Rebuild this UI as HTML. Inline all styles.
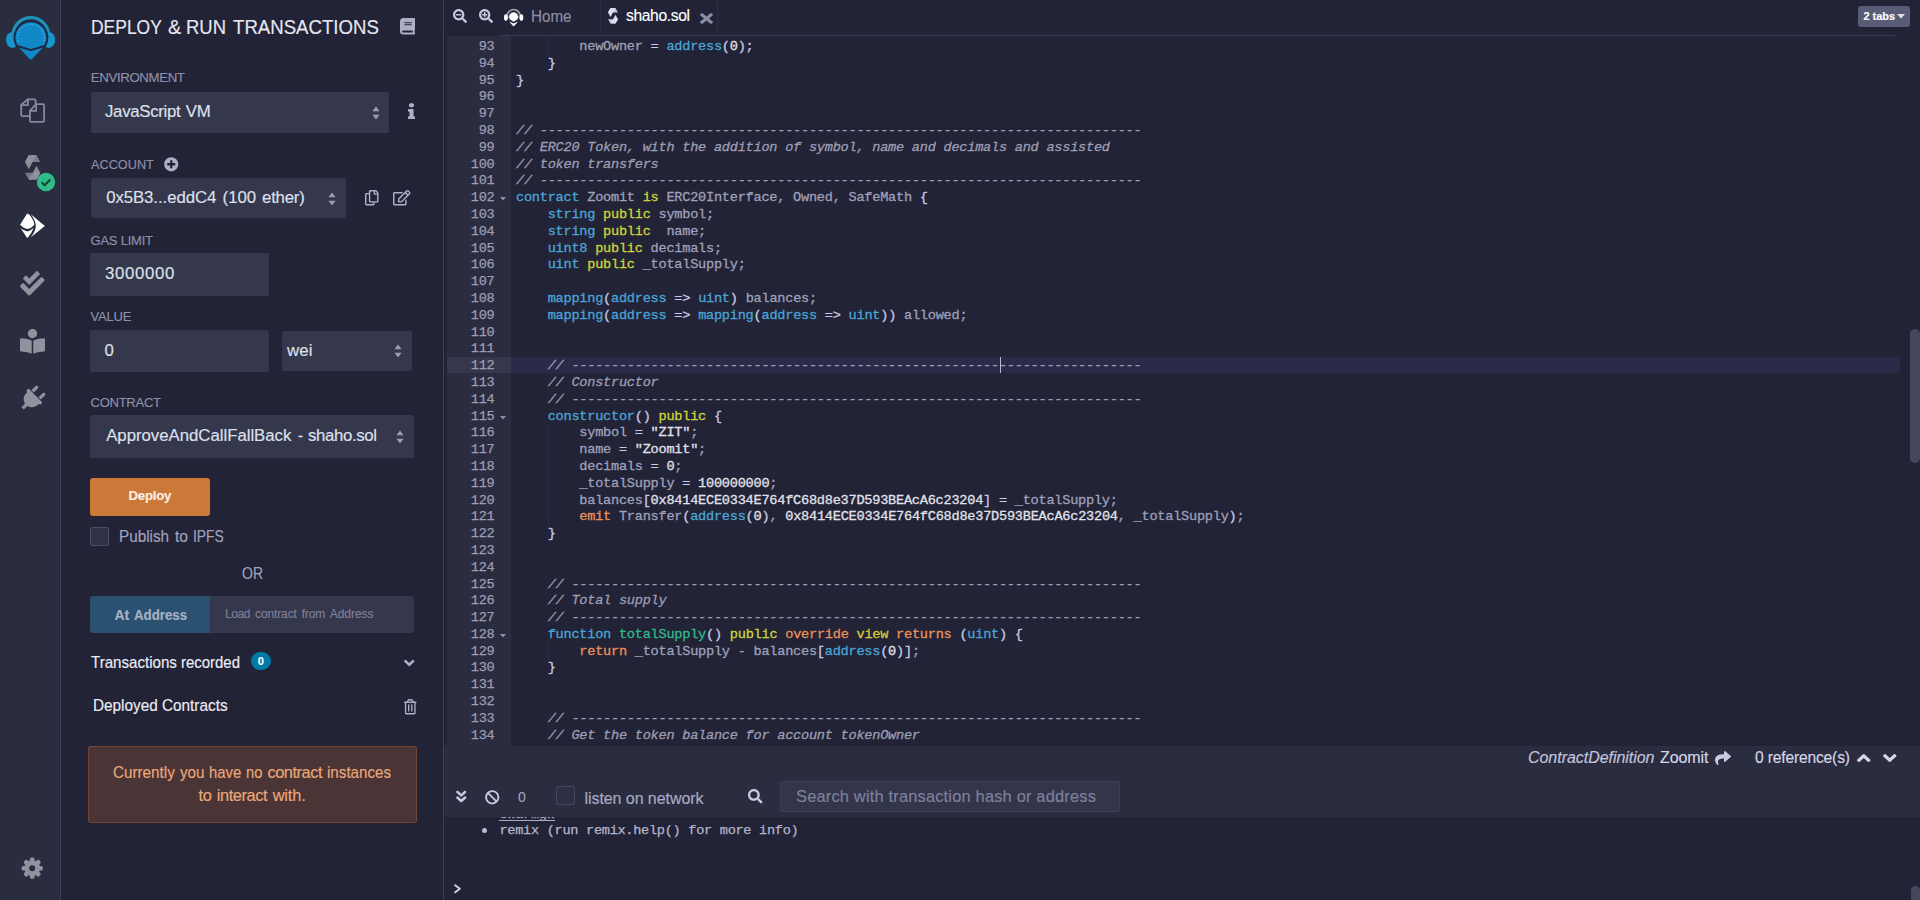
<!DOCTYPE html>
<html><head><meta charset="utf-8"><title>Remix - Ethereum IDE</title>
<style>
html,body{margin:0;padding:0;}
body{width:1920px;height:900px;overflow:hidden;background:#222336;position:relative;font-family:"Liberation Sans",sans-serif;}
.t{position:absolute;white-space:nowrap;-webkit-text-stroke:0.15px;}
.b{position:absolute;}
svg{position:absolute;overflow:visible;}
.code{position:absolute;left:516px;top:39px;font-family:"Liberation Mono",monospace;font-size:13.6px;letter-spacing:-0.241px;line-height:16.8px;color:#9fa0ba;white-space:pre;-webkit-text-stroke:0.3px;}
.code div{height:16.8px;}
.ln{position:absolute;left:446px;width:48.5px;top:39px;font-family:"Liberation Mono",monospace;font-size:13.6px;letter-spacing:-0.241px;line-height:16.8px;color:#9c9db6;text-align:right;-webkit-text-stroke:0.25px;}
.ln div{height:16.8px;}
.k{color:#4aa5d6}.y{color:#cbd63a}.v{color:#d9ca3c}.o{color:#e8915a}.g{color:#32ba89}.w{color:#e0e1eb}.c{color:#9d9eb3;font-style:italic}.p{color:#c8c9e6}
.term{position:absolute;font-family:"Liberation Mono",monospace;white-space:pre;-webkit-text-stroke:0.25px;}
</style></head><body>
<div class="b" style="left:0px;top:0px;width:60px;height:900px;background:#2a2c3f;"></div>
<div class="b" style="left:60px;top:0px;width:1px;height:900px;background:#3e4058;"></div>
<div class="b" style="left:443px;top:0px;width:1px;height:900px;background:#3e4058;"></div>
<div class="b" style="left:447px;top:36px;width:64px;height:710px;background:#2a2c3f;"></div>
<div class="b" style="left:447px;top:357px;width:64px;height:16px;background:#35384c;"></div>
<div class="b" style="left:511px;top:357px;width:1389px;height:16px;background:#2a2b48;"></div>
<div class="b" style="left:498.5px;top:35px;width:1396.5px;height:1px;background:#3b3d54;"></div>
<div class="b" style="left:600px;top:0px;width:1px;height:35px;background:#2c2e44;"></div>
<div class="b" style="left:717px;top:0px;width:1px;height:35px;background:#2c2e44;"></div>
<div class="b" style="left:444px;top:746px;width:1476px;height:71px;background:#2a2c3f;"></div>
<div class="b" style="left:444px;top:770px;width:1476px;height:1px;background:#282a3d;"></div>
<div class="b" style="left:444px;top:775px;width:1476px;height:1px;background:#2d2f43;"></div>
<div class="b" style="left:1910px;top:329px;width:10px;height:134px;background:#45475e;border-radius:5px;"></div>
<div class="b" style="left:1911px;top:886px;width:9px;height:14px;background:#45475e;border-radius:5px 5px 0 0;"></div>
<div class="t" style="left:90.80px;top:12.70px;font-size:19.7px;line-height:28px;color:#e6e7f1;transform:scaleX(0.8870);transform-origin:0 50%;">DEPLOY</div>
<div class="t" style="left:168.00px;top:12.70px;font-size:19.7px;line-height:28px;color:#e6e7f1;letter-spacing:-0.341px;">&amp;</div>
<div class="t" style="left:185.80px;top:12.70px;font-size:19.7px;line-height:28px;color:#e6e7f1;transform:scaleX(0.9372);transform-origin:0 50%;">RUN</div>
<div class="t" style="left:233.30px;top:12.70px;font-size:19.7px;line-height:28px;color:#e6e7f1;transform:scaleX(0.9460);transform-origin:0 50%;">TRANSACTIONS</div>
<div class="t" style="left:90.80px;top:68.10px;font-size:13.3px;line-height:19px;color:#8f91aa;letter-spacing:-0.408px;">ENVIRONMENT</div>
<div class="b" style="left:91px;top:92px;width:298px;height:41px;background:#35384c;border-radius:2px;"></div>
<div class="t" style="left:105.00px;top:99.60px;font-size:16.8px;line-height:24px;color:#dfe0ec;letter-spacing:-0.292px;">JavaScript</div>
<div class="t" style="left:185.80px;top:99.60px;font-size:16.8px;line-height:24px;color:#dfe0ec;letter-spacing:-0.201px;">VM</div>
<div class="t" style="left:90.60px;top:155.00px;font-size:13.3px;line-height:19px;color:#8f91aa;transform:scaleX(0.9565);transform-origin:0 50%;">ACCOUNT</div>
<div class="b" style="left:91px;top:178px;width:255px;height:40px;background:#35384c;border-radius:2px;"></div>
<div class="t" style="left:106.20px;top:186.40px;font-size:16.8px;line-height:24px;color:#dfe0ec;letter-spacing:-0.079px;">0x5B3...eddC4</div>
<div class="t" style="left:222.60px;top:186.40px;font-size:16.8px;line-height:24px;color:#dfe0ec;letter-spacing:-0.009px;">(100</div>
<div class="t" style="left:262.00px;top:186.40px;font-size:16.8px;line-height:24px;color:#dfe0ec;letter-spacing:-0.198px;">ether)</div>
<div class="t" style="left:90.50px;top:231.50px;font-size:13px;line-height:18px;color:#8f91aa;letter-spacing:-0.224px;">GAS LIMIT</div>
<div class="b" style="left:90px;top:253px;width:179px;height:43px;background:#35384c;border-radius:2px;"></div>
<div class="t" style="left:105.00px;top:262.00px;font-size:16.8px;line-height:24px;color:#dfe0ec;letter-spacing:0.682px;">3000000</div>
<div class="t" style="left:90.50px;top:308.00px;font-size:13px;line-height:18px;color:#8f91aa;letter-spacing:-0.167px;">VALUE</div>
<div class="b" style="left:90px;top:330px;width:179px;height:42px;background:#35384c;border-radius:2px;"></div>
<div class="t" style="left:104.50px;top:339.00px;font-size:16.8px;line-height:24px;color:#dfe0ec;letter-spacing:0.156px;">0</div>
<div class="b" style="left:282px;top:331px;width:130px;height:40px;background:#35384c;border-radius:2px;"></div>
<div class="t" style="left:287.00px;top:339.00px;font-size:16.8px;line-height:24px;color:#dfe0ec;letter-spacing:0.145px;">wei</div>
<div class="t" style="left:90.50px;top:393.50px;font-size:13px;line-height:18px;color:#8f91aa;letter-spacing:-0.246px;">CONTRACT</div>
<div class="b" style="left:90px;top:415px;width:324px;height:43px;background:#35384c;border-radius:2px;"></div>
<div class="t" style="left:106.20px;top:424.00px;font-size:16.8px;line-height:24px;color:#dfe0ec;letter-spacing:-0.021px;">ApproveAndCallFallBack</div>
<div class="t" style="left:297.50px;top:424.00px;font-size:16.8px;line-height:24px;color:#dfe0ec;transform:scaleX(0.8936);transform-origin:0 50%;">-</div>
<div class="t" style="left:308.10px;top:424.00px;font-size:16.8px;line-height:24px;color:#dfe0ec;letter-spacing:-0.365px;">shaho.sol</div>
<svg style="left:370.5px;top:105px" width="10" height="16" viewBox="0 0 10 16"><path d="M5 1.5 L8.6 6.2 H1.4 Z M5 14.5 L8.6 9.8 H1.4 Z" fill="#9b9cb4"/></svg>
<svg style="left:327px;top:190.5px" width="10" height="16" viewBox="0 0 10 16"><path d="M5 1.5 L8.6 6.2 H1.4 Z M5 14.5 L8.6 9.8 H1.4 Z" fill="#9b9cb4"/></svg>
<svg style="left:393px;top:343px" width="10" height="16" viewBox="0 0 10 16"><path d="M5 1.5 L8.6 6.2 H1.4 Z M5 14.5 L8.6 9.8 H1.4 Z" fill="#9b9cb4"/></svg>
<svg style="left:394.5px;top:429px" width="10" height="16" viewBox="0 0 10 16"><path d="M5 1.5 L8.6 6.2 H1.4 Z M5 14.5 L8.6 9.8 H1.4 Z" fill="#9b9cb4"/></svg>
<div class="b" style="left:90px;top:477.5px;width:120px;height:38.5px;background:#cc7838;border-radius:3px;"></div>
<div class="t" style="left:128.50px;top:487.00px;font-size:13.2px;line-height:18px;color:#fbeee4;letter-spacing:-0.202px;font-weight:bold;">Deploy</div>
<div class="b" style="left:90.3px;top:527.2px;width:18.900000000000006px;height:18.59999999999991px;background:#2f3147;border-radius:3px;box-shadow:inset 0 0 0 1px #4b4d65;"></div>
<div class="t" style="left:119.30px;top:525.30px;font-size:16.6px;line-height:23px;color:#a2a3bd;transform:scaleX(0.9202);transform-origin:0 50%;">Publish</div>
<div class="t" style="left:174.70px;top:525.30px;font-size:16.6px;line-height:23px;color:#a2a3bd;transform:scaleX(0.9390);transform-origin:0 50%;">to</div>
<div class="t" style="left:193.00px;top:525.30px;font-size:16.6px;line-height:23px;color:#a2a3bd;transform:scaleX(0.8347);transform-origin:0 50%;">IPFS</div>
<div class="t" style="left:241.50px;top:561.50px;font-size:16.4px;line-height:23px;color:#a2a3bd;transform:scaleX(0.8537);transform-origin:0 50%;">OR</div>
<div class="b" style="left:90px;top:595.5px;width:120px;height:37.5px;background:#2b5170;border-radius:3px 0 0 3px;"></div>
<div class="t" style="left:114.50px;top:604.60px;font-size:14px;line-height:20px;color:#a7b3c6;letter-spacing:-0.073px;font-weight:bold;">At</div>
<div class="t" style="left:134.00px;top:604.60px;font-size:14px;line-height:20px;color:#a7b3c6;transform:scaleX(0.9478);transform-origin:0 50%;font-weight:bold;">Address</div>
<div class="b" style="left:210px;top:595.5px;width:204px;height:37.5px;background:#35384c;border-radius:0 3px 3px 0;"></div>
<div class="t" style="left:224.90px;top:605.80px;font-size:12px;line-height:17px;color:#7d7f98;letter-spacing:-0.399px;">Load</div>
<div class="t" style="left:255.00px;top:605.80px;font-size:12px;line-height:17px;color:#7d7f98;letter-spacing:-0.112px;">contract</div>
<div class="t" style="left:301.70px;top:605.80px;font-size:12px;line-height:17px;color:#7d7f98;letter-spacing:-0.134px;">from</div>
<div class="t" style="left:329.70px;top:605.80px;font-size:12px;line-height:17px;color:#7d7f98;letter-spacing:-0.021px;">Address</div>
<div class="t" style="left:90.60px;top:651.30px;font-size:16.6px;line-height:23px;color:#ecedf5;transform:scaleX(0.9098);transform-origin:0 50%;">Transactions</div>
<div class="t" style="left:181.30px;top:651.30px;font-size:16.6px;line-height:23px;color:#ecedf5;transform:scaleX(0.9005);transform-origin:0 50%;">recorded</div>
<div class="b" style="left:250.6px;top:652.4px;width:20.599999999999994px;height:17.200000000000045px;background:#007aa6;border-radius:9px;"></div>
<div class="t" style="left:257.80px;top:653.50px;font-size:11px;line-height:15px;color:#ffffff;letter-spacing:0.082px;font-weight:bold;">0</div>
<div class="t" style="left:92.80px;top:693.70px;font-size:16.6px;line-height:23px;color:#ecedf5;transform:scaleX(0.9239);transform-origin:0 50%;">Deployed</div>
<div class="t" style="left:162.30px;top:693.70px;font-size:16.6px;line-height:23px;color:#ecedf5;transform:scaleX(0.9235);transform-origin:0 50%;">Contracts</div>
<div class="b" style="left:87.5px;top:746px;width:329.0px;height:77px;background:#4a3436;border-radius:3px;box-shadow:inset 0 0 0 1px #6e4536;"></div>
<div class="t" style="left:113.30px;top:760.90px;font-size:16.4px;line-height:23px;color:#eaa878;transform:scaleX(0.9289);transform-origin:0 50%;">Currently</div>
<div class="t" style="left:180.00px;top:760.90px;font-size:16.4px;line-height:23px;color:#eaa878;transform:scaleX(0.9265);transform-origin:0 50%;">you</div>
<div class="t" style="left:209.30px;top:760.90px;font-size:16.4px;line-height:23px;color:#eaa878;transform:scaleX(0.9054);transform-origin:0 50%;">have</div>
<div class="t" style="left:246.10px;top:760.90px;font-size:16.4px;line-height:23px;color:#eaa878;transform:scaleX(0.8935);transform-origin:0 50%;">no</div>
<div class="t" style="left:267.40px;top:760.90px;font-size:16.4px;line-height:23px;color:#eaa878;letter-spacing:-0.448px;">contract</div>
<div class="t" style="left:327.00px;top:760.90px;font-size:16.4px;line-height:23px;color:#eaa878;transform:scaleX(0.9252);transform-origin:0 50%;">instances</div>
<div class="t" style="left:198.60px;top:783.70px;font-size:16.4px;line-height:23px;color:#eaa878;letter-spacing:-0.377px;">to</div>
<div class="t" style="left:216.70px;top:783.70px;font-size:16.4px;line-height:23px;color:#eaa878;letter-spacing:-0.397px;">interact</div>
<div class="t" style="left:272.70px;top:783.70px;font-size:16.4px;line-height:23px;color:#eaa878;letter-spacing:-0.155px;">with.</div>
<div class="t" style="left:530.50px;top:5.70px;font-size:15.8px;line-height:22px;color:#8d8ea8;transform:scaleX(0.9609);transform-origin:0 50%;">Home</div>
<div class="t" style="left:626.00px;top:5.10px;font-size:15.6px;line-height:22px;color:#ffffff;letter-spacing:-0.348px;">shaho.sol</div>
<div class="b" style="left:1857.5px;top:6px;width:52.5px;height:20.5px;background:#595c76;border-radius:3px;"></div>
<div class="t" style="left:1863.50px;top:8.50px;font-size:11px;line-height:15px;color:#ffffff;letter-spacing:-0.059px;font-weight:bold;">2 tabs</div>
<svg style="left:1897px;top:14px" width="8" height="5" viewBox="0 0 8 5"><path d="M0 0H8L4 4.5Z" fill="#e0e0ea"/></svg>
<div class="t" style="left:1528.00px;top:747.00px;font-size:16px;line-height:22px;color:#c3c4dc;letter-spacing:-0.040px;font-style:italic;">ContractDefinition</div>
<div class="t" style="left:1660.00px;top:747.00px;font-size:16px;line-height:22px;color:#d5d6e8;letter-spacing:-0.080px;">Zoomit</div>
<div class="t" style="left:1755.00px;top:747.00px;font-size:15.6px;line-height:22px;color:#d5d6e8;letter-spacing:-0.162px;">0 reference(s)</div>
<div class="t" style="left:518.00px;top:787.00px;font-size:14px;line-height:20px;color:#a2a3bd;letter-spacing:0.214px;">0</div>
<div class="b" style="left:555.5px;top:786px;width:19.5px;height:19px;background:#2d2f45;border-radius:3px;box-shadow:inset 0 0 0 1px #45475f;"></div>
<div class="t" style="left:584.50px;top:787.50px;font-size:16px;line-height:22px;color:#a9aac3;letter-spacing:-0.067px;">listen on network</div>
<div class="b" style="left:780px;top:781px;width:340px;height:30.600000000000023px;background:#33354b;border-radius:3px;box-shadow:inset 0 0 0 1px #3e4058;"></div>
<div class="t" style="left:796.00px;top:784.50px;font-size:16.4px;line-height:23px;color:#7f819b;letter-spacing:0.194px;">Search with transaction hash or address</div>
<div class="term" style="left:499.5px;top:821.8px;font-size:13.6px;letter-spacing:-0.291px;line-height:17px;color:#b4b5cd;">remix (run remix.help() for more info)</div>
<div class="b" style="left:482.3px;top:828px;width:5.0px;height:5px;background:#b8b9d3;border-radius:3px;"></div>
<div class="b" style="left:495px;top:817px;width:70px;height:6px;overflow:hidden;"><div class="term" style="left:4.5px;top:-10.6px;font-size:13.6px;letter-spacing:-0.291px;line-height:17px;color:#b4b5cd;color:#a9aac6;">swarmgw</div><div class="b" style="left:4px;top:3px;width:55.5px;height:1px;background:#a9aac6;"></div></div>
<svg style="left:453.5px;top:883.5px" width="7.5" height="9.5" viewBox="0 0 7.5 9.5"><path d="M1.2 1.2 L5.8 4.75 L1.2 8.3" fill="none" stroke="#d0d1e6" stroke-width="2" stroke-linecap="round" stroke-linejoin="round"/></svg>
<div class="ln"><div>93</div><div>94</div><div>95</div><div>96</div><div>97</div><div>98</div><div>99</div><div>100</div><div>101</div><div>102</div><div>103</div><div>104</div><div>105</div><div>106</div><div>107</div><div>108</div><div>109</div><div>110</div><div>111</div><div>112</div><div>113</div><div>114</div><div>115</div><div>116</div><div>117</div><div>118</div><div>119</div><div>120</div><div>121</div><div>122</div><div>123</div><div>124</div><div>125</div><div>126</div><div>127</div><div>128</div><div>129</div><div>130</div><div>131</div><div>132</div><div>133</div><div>134</div></div>
<div class="code"><div>        newOwner <span class="p">=</span> <span class="k">address</span><span class="p">(</span><span class="w">0</span><span class="p">);</span></div><div>    <span class="p">}</span></div><div><span class="p">}</span></div><div> </div><div> </div><div><span class="c">// ----------------------------------------------------------------------------</span></div><div><span class="c">// ERC20 Token, with the addition of symbol, name and decimals and assisted</span></div><div><span class="c">// token transfers</span></div><div><span class="c">// ----------------------------------------------------------------------------</span></div><div><span class="k">contract</span> Zoomit <span class="y">is</span> ERC20Interface, Owned, SafeMath <span class="p">{</span></div><div>    <span class="k">string</span> <span class="y">public</span> symbol;</div><div>    <span class="k">string</span> <span class="y">public</span>  name;</div><div>    <span class="k">uint8</span> <span class="y">public</span> decimals;</div><div>    <span class="k">uint</span> <span class="y">public</span> _totalSupply;</div><div> </div><div>    <span class="k">mapping</span><span class="p">(</span><span class="k">address</span> <span class="p">=&gt;</span> <span class="k">uint</span><span class="p">)</span> balances;</div><div>    <span class="k">mapping</span><span class="p">(</span><span class="k">address</span> <span class="p">=&gt;</span> <span class="k">mapping</span><span class="p">(</span><span class="k">address</span> <span class="p">=&gt;</span> <span class="k">uint</span><span class="p">))</span> allowed;</div><div> </div><div> </div><div>    <span class="c">// ------------------------------------------------------------------------</span></div><div>    <span class="c">// Constructor</span></div><div>    <span class="c">// ------------------------------------------------------------------------</span></div><div>    <span class="k">constructor</span><span class="p">()</span> <span class="y">public</span> <span class="p">{</span></div><div>        symbol <span class="p">=</span> <span class="w">"ZIT"</span>;</div><div>        name <span class="p">=</span> <span class="w">"Zoomit"</span>;</div><div>        decimals <span class="p">=</span> <span class="w">0</span>;</div><div>        _totalSupply <span class="p">=</span> <span class="w">100000000</span>;</div><div>        balances<span class="p">[</span><span class="w">0x8414ECE0334E764fC68d8e37D593BEAcA6c23204</span><span class="p">]</span> <span class="p">=</span> _totalSupply;</div><div>        <span class="o">emit</span> Transfer<span class="p">(</span><span class="k">address</span><span class="p">(</span><span class="w">0</span><span class="p">)</span>, <span class="w">0x8414ECE0334E764fC68d8e37D593BEAcA6c23204</span>, _totalSupply<span class="p">)</span>;</div><div>    <span class="p">}</span></div><div> </div><div> </div><div>    <span class="c">// ------------------------------------------------------------------------</span></div><div>    <span class="c">// Total supply</span></div><div>    <span class="c">// ------------------------------------------------------------------------</span></div><div>    <span class="k">function</span> <span class="g">totalSupply</span><span class="p">()</span> <span class="y">public</span> <span class="o">override</span> <span class="v">view</span> <span class="o">returns</span> <span class="p">(</span><span class="k">uint</span><span class="p">)</span> <span class="p">{</span></div><div>        <span class="o">return</span> _totalSupply - balances<span class="p">[</span><span class="k">address</span><span class="p">(</span><span class="w">0</span><span class="p">)]</span>;</div><div>    <span class="p">}</span></div><div> </div><div> </div><div>    <span class="c">// ------------------------------------------------------------------------</span></div><div>    <span class="c">// Get the token balance for account tokenOwner</span></div></div>
<svg style="left:500px;top:197.1px" width="6" height="4" viewBox="0 0 6 4"><path d="M0 0H6L3 3.5Z" fill="#8f90a8"/></svg>
<svg style="left:500px;top:415.5px" width="6" height="4" viewBox="0 0 6 4"><path d="M0 0H6L3 3.5Z" fill="#8f90a8"/></svg>
<svg style="left:500px;top:633.9px" width="6" height="4" viewBox="0 0 6 4"><path d="M0 0H6L3 3.5Z" fill="#8f90a8"/></svg>
<div class="b" style="left:999.5px;top:357px;width:1.5px;height:16px;background:#b9bad6;"></div>
<div class="b" style="left:548px;top:37.8px;width:0;height:16.8px;border-left:1px dotted #34364d;"></div>
<div class="b" style="left:548px;top:424.2px;width:0;height:100.8px;border-left:1px dotted #34364d;"></div>
<div class="b" style="left:548px;top:642.6px;width:0;height:16.8px;border-left:1px dotted #34364d;"></div>
<svg style="left:400px;top:18px;" width="15" height="16.5" viewBox="0 0 448 512" preserveAspectRatio="none"><path d="M448 360V24c0-13.3-10.7-24-24-24H96C43 0 0 43 0 96v320c0 53 43 96 96 96h328c13.3 0 24-10.7 24-24v-16c0-7.5-3.5-14.3-8.9-18.7-4.2-15.4-4.2-59.3 0-74.700 5.400-4.300 8.900-11.100 8.900-18.600zM128 134c0-3.300 2.700-6 6-6h212c3.300 0 6 2.700 6 6v20c0 3.300-2.700 6-6 6H134c-3.300 0-6-2.700-6-6v-20zm0 64c0-3.300 2.700-6 6-6h212c3.300 0 6 2.700 6 6v20c0 3.300-2.700 6-6 6H134c-3.300 0-6-2.700-6-6v-20zm253.400 250H96c-17.700 0-32-14.300-32-32 0-17.600 14.400-32 32-32h285.400c-1.900 17.100-1.900 46.900 0 64z" fill="#adaec8"/></svg>
<svg style="left:408px;top:103px;" width="7" height="16" viewBox="0 0 192 512" preserveAspectRatio="none"><path d="M20 424.229h20V279.771H20c-11.046 0-20-8.954-20-20V212c0-11.046 8.954-20 20-20h112c11.046 0 20 8.954 20 20v212.229h20c11.046 0 20 8.954 20 20V492c0 11.046-8.954 20-20 20H20c-11.046 0-20-8.954-20-20v-47.771c0-11.046 8.954-20 20-20zM96 0C56.235 0 24 32.235 24 72s32.235 72 72 72 72-32.235 72-72S135.764 0 96 0z" fill="#adaec8"/></svg>
<svg style="left:163.5px;top:157px;" width="14.5" height="14.5" viewBox="0 0 512 512" preserveAspectRatio="none"><path d="M256 8C119 8 8 119 8 256s111 248 248 248 248-111 248-248S393 8 256 8zm144 276c0 6.600-5.400 12-12 12h-92v92c0 6.600-5.400 12-12 12h-56c-6.600 0-12-5.400-12-12v-92h-92c-6.600 0-12-5.400-12-12v-56c0-6.600 5.400-12 12-12h92v-92c0-6.600 5.400-12 12-12h56c6.600 0 12 5.400 12 12v92h92c6.600 0 12 5.400 12 12v56z" fill="#adaec8"/></svg>
<svg style="left:365px;top:190px;" width="13.5" height="15.5" viewBox="0 0 448 512" preserveAspectRatio="none"><path d="M433.941 65.941l-51.882-51.882A48 48 0 0 0 348.118 0H176c-26.510 0-48 21.490-48 48v48H48c-26.510 0-48 21.490-48 48v320c0 26.510 21.490 48 48 48h224c26.510 0 48-21.490 48-48v-48h80c26.510 0 48-21.490 48-48V99.882a48 48 0 0 0-14.059-33.941zM266 464H54a6 6 0 0 1-6-6V150a6 6 0 0 1 6-6h74v224c0 26.510 21.490 48 48 48h96v42a6 6 0 0 1-6 6zm128-96H182a6 6 0 0 1-6-6V54a6 6 0 0 1 6-6h106v88c0 13.255 10.745 24 24 24h88v202a6 6 0 0 1-6 6zm6-256h-64V48h9.632c1.591 0 3.117.632 4.243 1.757l48.368 48.368a6 6 0 0 1 1.757 4.243V112z" fill="#adaec8"/></svg>
<svg style="left:392.5px;top:190px;" width="17.5" height="15.5" viewBox="0 0 576 512" preserveAspectRatio="none"><path d="M402.300 344.900l32-32c5-5 13.700-1.500 13.700 5.700V464c0 26.500-21.500 48-48 48H48c-26.500 0-48-21.500-48-48V112c0-26.500 21.500-48 48-48h273.500c7.100 0 10.700 8.600 5.700 13.700l-32 32c-1.500 1.500-3.500 2.300-5.700 2.300H48v352h352V350.500c0-2.100.800-4.100 2.300-5.600zm156.600-201.800L296.300 405.700l-90.400 10c-26.200 2.900-48.500-19.200-45.600-45.600l10-90.400L432.900 17.100c22.900-22.900 59.900-22.900 82.700 0l43.200 43.200c22.900 22.900 22.900 60 .100 82.800zM460.100 174L402 115.900 216.200 301.800l-7.300 65.300 65.300-7.300L460.100 174zm64.800-79.700l-43.200-43.200c-4.100-4.100-10.800-4.100-14.800 0L436 82l58.100 58.100 30.900-30.900c4-4.200 4-10.800-.100-14.900z" fill="#adaec8"/></svg>
<svg style="left:404px;top:655px;" width="10.5" height="16" viewBox="0 0 320 512" preserveAspectRatio="none"><path d="M143 352.300L7 216.300c-9.400-9.400-9.400-24.600 0-33.900l22.600-22.600c9.400-9.400 24.600-9.400 33.900 0l96.400 96.400 96.400-96.400c9.400-9.400 24.600-9.400 33.900 0l22.600 22.600c9.400 9.400 9.400 24.600 0 33.900l-136 136c-9.200 9.400-24.400 9.400-33.800 0z" fill="#adaec8"/></svg>
<svg style="left:403.5px;top:698.5px;" width="12.5" height="15.5" viewBox="0 0 448 512" preserveAspectRatio="none"><path d="M268 416h24a12 12 0 0 0 12-12V188a12 12 0 0 0-12-12h-24a12 12 0 0 0-12 12v216a12 12 0 0 0 12 12zM432 80h-82.410l-34-56.700A48 48 0 0 0 274.410 0H173.590a48 48 0 0 0-41.160 23.300L98.410 80H16A16 16 0 0 0 0 96v16a16 16 0 0 0 16 16h16v336a48 48 0 0 0 48 48h288a48 48 0 0 0 48-48V128h16a16 16 0 0 0 16-16V96a16 16 0 0 0-16-16zM171.840 50.910A6 6 0 0 1 177 48h94a6 6 0 0 1 5.150 2.910L293.610 80H154.390zM368 464H80V128h288zm-212-48h24a12 12 0 0 0 12-12V188a12 12 0 0 0-12-12h-24a12 12 0 0 0-12 12v216a12 12 0 0 0 12 12z" fill="#adaec8"/></svg>
<svg style="left:452.5px;top:9px;" width="14.0" height="14" viewBox="0 0 512 512" preserveAspectRatio="none"><path d="M505 442.700L405.300 343c-4.500-4.500-10.600-7-17-7H372c27.600-35.300 44-79.700 44-128C416 93.100 322.900 0 208 0S0 93.100 0 208s93.100 208 208 208c48.300 0 92.700-16.400 128-44v16.300c0 6.400 2.500 12.500 7 17l99.700 99.700c9.400 9.400 24.600 9.400 33.900 0l28.300-28.300c9.400-9.400 9.400-24.600.100-34zM208 336c-70.700 0-128-57.200-128-128 0-70.700 57.200-128 128-128 70.700 0 128 57.200 128 128 0 70.700-57.200 128-128 128zM304 192v32c0 6.600-5.400 12-12 12H124c-6.600 0-12-5.400-12-12v-32c0-6.600 5.400-12 12-12h168c6.600 0 12 5.400 12 12z" fill="#c5c6e0"/></svg>
<svg style="left:478.5px;top:9px;" width="14.0" height="14" viewBox="0 0 512 512" preserveAspectRatio="none"><path d="M505 442.700L405.300 343c-4.500-4.500-10.600-7-17-7H372c27.600-35.300 44-79.700 44-128C416 93.100 322.900 0 208 0S0 93.100 0 208s93.100 208 208 208c48.300 0 92.700-16.400 128-44v16.300c0 6.400 2.500 12.500 7 17l99.700 99.700c9.400 9.400 24.600 9.400 33.900 0l28.300-28.300c9.400-9.400 9.400-24.600.100-34zM208 336c-70.700 0-128-57.200-128-128 0-70.700 57.200-128 128-128 70.700 0 128 57.200 128 128 0 70.700-57.200 128-128 128zM304 192v32c0 6.600-5.400 12-12 12h-56v56c0 6.600-5.400 12-12 12h-32c-6.600 0-12-5.400-12-12v-56h-56c-6.600 0-12-5.400-12-12v-32c0-6.600 5.400-12 12-12h56v-56c0-6.600 5.400-12 12-12h32c6.600 0 12 5.400 12 12v56h56c6.600 0 12 5.400 12 12z" fill="#c5c6e0"/></svg>
<svg style="left:700px;top:10.5px;" width="13" height="15.0" viewBox="0 0 352 512" preserveAspectRatio="none"><path d="M242.720 256l100.070-100.070c12.280-12.280 12.280-32.190 0-44.480l-22.240-22.240c-12.280-12.280-32.190-12.280-44.480 0L176 189.280 75.930 89.210c-12.280-12.280-32.190-12.280-44.480 0L9.210 111.450c-12.280 12.280-12.280 32.190 0 44.480L109.280 256 9.210 356.070c-12.280 12.280-12.280 32.190 0 44.480l22.240 22.240c12.280 12.280 32.200 12.280 44.480 0L176 322.720l100.070 100.070c12.280 12.280 32.200 12.280 44.480 0l22.240-22.240c12.280-12.280 12.280-32.190 0-44.480L242.720 256z" fill="#8d8ea8"/></svg>
<svg style="left:1715px;top:750px;" width="16" height="16" viewBox="0 0 512 512" preserveAspectRatio="none"><path d="M503.691 189.836L327.687 37.851C312.281 24.546 288 35.347 288 56.015v80.053C127.371 137.907 0 170.100 0 322.326c0 61.441 39.581 122.309 83.333 154.132 13.653 9.931 33.111-2.533 28.077-18.631C66.066 312.814 132.917 274.316 288 272.085V360c0 20.700 24.300 31.453 39.687 18.164l176.004-152c11.071-9.562 11.086-26.753 0-36.328z" fill="#c9cae2"/></svg>
<svg style="left:1857px;top:748px;transform:rotate(180deg);" width="13.5" height="20" viewBox="0 0 320 512" preserveAspectRatio="none"><path d="M143 352.300L7 216.300c-9.400-9.400-9.400-24.600 0-33.900l22.600-22.600c9.400-9.400 24.600-9.400 33.900 0l96.400 96.400 96.400-96.400c9.400-9.400 24.600-9.400 33.900 0l22.600 22.600c9.400 9.400 9.400 24.600 0 33.900l-136 136c-9.200 9.400-24.400 9.400-33.800 0z" fill="#d5d6e8"/></svg>
<svg style="left:1883px;top:748px;" width="13.5" height="20" viewBox="0 0 320 512" preserveAspectRatio="none"><path d="M143 352.300L7 216.300c-9.400-9.400-9.400-24.600 0-33.900l22.600-22.600c9.400-9.400 24.600-9.400 33.900 0l96.400 96.400 96.400-96.400c9.400-9.400 24.600-9.400 33.900 0l22.600 22.600c9.400 9.400 9.400 24.600 0 33.900l-136 136c-9.200 9.400-24.400 9.400-33.800 0z" fill="#d5d6e8"/></svg>
<svg style="left:455.5px;top:788.6px;" width="10.5" height="15.0" viewBox="0 0 320 512" preserveAspectRatio="none"><path d="M143 256.300L7 120.300c-9.400-9.400-9.400-24.600 0-33.900l22.600-22.600c9.400-9.400 24.600-9.400 33.900 0l96.400 96.400 96.400-96.400c9.400-9.400 24.600-9.400 33.900 0L313 86.300c9.400 9.400 9.400 24.600 0 33.900l-136 136c-9.400 9.500-24.600 9.500-34 .100zm34 192l136-136c9.400-9.400 9.400-24.600 0-33.900l-22.600-22.600c-9.400-9.400-24.600-9.400-33.900 0L160 352.100l-96.400-96.400c-9.400-9.400-24.600-9.400-33.900 0L7 278.300c-9.400 9.400-9.400 24.600 0 33.900l136 136c9.400 9.500 24.600 9.500 34 .100z" fill="#c9cae2"/></svg>
<svg style="left:484.5px;top:789.5px;" width="14.5" height="14.5" viewBox="0 0 512 512" preserveAspectRatio="none"><path d="M256 8C119.034 8 8 119.033 8 256s111.034 248 248 248 248-111.034 248-248S392.967 8 256 8zm130.108 117.892c65.448 65.448 70 165.481 20.677 235.637L150.470 105.216c70.204-49.356 170.226-44.735 235.638 20.676zM125.892 386.108c-65.448-65.448-70-165.481-20.677-235.637L361.530 406.784c-70.203 49.356-170.226 44.736-235.638-20.676z" fill="#c9cae2"/></svg>
<svg style="left:747.5px;top:788.5px;" width="14.5" height="14.5" viewBox="0 0 512 512" preserveAspectRatio="none"><path d="M505 442.700L405.300 343c-4.500-4.500-10.600-7-17-7H372c27.600-35.300 44-79.700 44-128C416 93.100 322.900 0 208 0S0 93.100 0 208s93.100 208 208 208c48.300 0 92.700-16.400 128-44v16.300c0 6.400 2.500 12.500 7 17l99.700 99.700c9.400 9.400 24.600 9.400 33.900 0l28.300-28.300c9.400-9.400 9.400-24.600.100-34zM208 336c-70.700 0-128-57.200-128-128 0-70.700 57.200-128 128-128 70.700 0 128 57.200 128 128 0 70.700-57.200 128-128 128z" fill="#c9cae2"/></svg>
<svg style="left:20px;top:271px;" width="24.5" height="24.5" viewBox="0 0 512 512" preserveAspectRatio="none"><path d="M505 174.800l-39.600-39.600c-9.400-9.400-24.600-9.400-33.900 0L192 374.700 80.600 263.200c-9.400-9.400-24.600-9.400-33.900 0L7 302.900c-9.400 9.400-9.400 24.600 0 34L175 505c9.400 9.400 24.600 9.400 33.900 0l296-296.200c9.400-9.500 9.400-24.700.100-34zm-324.300 106c6.200 6.300 16.400 6.300 22.600 0l208-208.200c6.200-6.300 6.200-16.400 0-22.600L366.100 4.700c-6.200-6.300-16.400-6.300-22.600 0L192 156.200l-55.400-55.500c-6.200-6.300-16.400-6.300-22.600 0L68.700 146c-6.200 6.300-6.200 16.400 0 22.600l112 112.200z" fill="#91929d"/></svg>
<svg style="left:20px;top:328.5px;" width="25" height="24.5" viewBox="0 0 512 512" preserveAspectRatio="none"><path d="M352 96c0-53.020-42.980-96-96-96s-96 42.980-96 96 42.980 96 96 96 96-42.980 96-96zM233.590 241.100c-59.330-36.320-155.430-46.300-203.790-49.050C13.550 191.130 0 203.510 0 219.140v222.800c0 14.330 11.590 26.280 26.490 27.050 43.660 2.290 131.990 10.680 193.040 41.430 9.370 4.720 20.480-1.710 20.480-11.870V252.560c-.010-4.670-2.320-8.950-6.420-11.460zm248.610-49.050c-48.350 2.740-144.460 12.730-203.780 49.050-4.100 2.510-6.410 6.960-6.410 11.630v245.790c0 10.190 11.140 16.630 20.540 11.900 61.040-30.720 149.320-39.110 192.970-41.400 14.900-.78 26.490-12.730 26.490-27.060V219.140c-.010-15.630-13.560-28.010-29.810-27.090z" fill="#91929d"/></svg>
<svg style="left:21px;top:857.1px" width="22.4" height="22.4" viewBox="-11.2 -11.2 22.4 22.4"><g fill="#91929d"><rect x="-2.3" y="-10.6" width="4.6" height="5.5" rx="1.5" transform="rotate(0)"/><rect x="-2.3" y="-10.6" width="4.6" height="5.5" rx="1.5" transform="rotate(45)"/><rect x="-2.3" y="-10.6" width="4.6" height="5.5" rx="1.5" transform="rotate(90)"/><rect x="-2.3" y="-10.6" width="4.6" height="5.5" rx="1.5" transform="rotate(135)"/><rect x="-2.3" y="-10.6" width="4.6" height="5.5" rx="1.5" transform="rotate(180)"/><rect x="-2.3" y="-10.6" width="4.6" height="5.5" rx="1.5" transform="rotate(225)"/><rect x="-2.3" y="-10.6" width="4.6" height="5.5" rx="1.5" transform="rotate(270)"/><rect x="-2.3" y="-10.6" width="4.6" height="5.5" rx="1.5" transform="rotate(315)"/><circle r="7.9"/></g><circle r="3" fill="#2a2c3f"/></svg>
<svg style="left:17px;top:383.5px" width="30" height="30" viewBox="-290 -290 580 580"><g transform="rotate(45) translate(-192,-256)"><path d="M256 144V32c0-17.673 14.327-32 32-32s32 14.327 32 32v112h-64zm112 16H16c-8.837 0-16 7.163-16 16v32c0 8.837 7.163 16 16 16h16v32c0 77.406 54.969 141.971 128 156.796V512h64v-99.204c73.031-14.825 128-79.390 128-156.796v-32h16c8.837 0 16-7.163 16-16v-32c0-8.837-7.163-16-16-16zm-240-16V32c0-17.673-14.327-32-32-32S64 14.327 64 32v112h64z" fill="#91929d"/></g></svg>
<svg style="left:36px;top:171.5px" width="20" height="20" viewBox="0 0 20 20"><circle cx="10" cy="10" r="9.9" fill="#1d3340"/><circle cx="10" cy="10" r="9.2" fill="#32ba89"/><path d="M5.6 10.3 L8.7 13.2 L14.3 7.4" fill="none" stroke="#0c4a35" stroke-width="2.1"/></svg>
<svg style="left:6.2px;top:16.5px" width="49.2" height="42.8" viewBox="6.2 16.5 49.2 42.8" preserveAspectRatio="none"><path d="M13.3 33 A17.8 17.8 0 0 1 48.7 33" fill="none" stroke="#1e92b6" stroke-width="3.3"/><ellipse cx="12.6" cy="39.4" rx="6.4" ry="8" fill="#1a95cb"/><ellipse cx="49" cy="39.4" rx="6.4" ry="8" fill="#1a95cb"/><path d="M17.6 45.6 L31.1 50 L44.6 45.6 L31.8 58.9 Q31.1 59.6 30.4 58.9 Z" fill="#1088c7"/><path d="M17.5 44.6 A15.5 15.5 0 1 1 44.7 44.6 L31.1 48.6 Z" fill="#1b2947" stroke="#1b2947" stroke-width="3.8" stroke-linejoin="round"/><path d="M17.5 44.6 A15.5 15.5 0 1 1 44.7 44.6 L31.1 48.6 Z" fill="#1088c7"/><path d="M18.35 40.4 A13.2 13.2 0 1 1 43.85 40.4" fill="none" stroke="#43aee0" stroke-width="1.5" stroke-dasharray="0.1 2.85" stroke-linecap="round"/></svg>
<svg style="left:503px;top:7px" width="22" height="21" viewBox="503 7 22 21"><path d="M507.3 18.6 A6.7 6.7 0 1 1 519.9 18.6" fill="none" stroke="#a3a4b2" stroke-width="1.5"/><ellipse cx="505.9" cy="17.6" rx="1.9" ry="3.3" fill="#fff"/><ellipse cx="521.4" cy="17.6" rx="1.9" ry="3.3" fill="#fff"/><path d="M509 21.4 L513.6 23.4 L518.2 21.4 L513.9 26.3 Q513.6 26.6 513.3 26.3 Z" fill="#fff"/><path d="M509.6 19.6 A4.8 4.8 0 1 1 517.6 19.6 L513.6 21.9 Z" fill="#fff" stroke="#222336" stroke-width="0.5"/></svg>
<svg style="left:19px;top:97px" width="27" height="27" viewBox="19 97 27 27"><g fill="none" stroke="#8687a0" stroke-width="1.8" stroke-linejoin="round" stroke-linecap="round"><path d="M29.6 116.2 H22.4 Q21.2 116.2 21.2 115 V104.9 L27.9 99.3 H34.4 Q35.6 99.3 35.6 100.5 V103.6"/><path d="M21.4 105.2 H27.9 V99.5"/><path d="M29.9 110.8 L36 104.2 H42.9 Q44.1 104.2 44.1 105.4 V120.7 Q44.1 121.9 42.9 121.9 H31.1 Q29.9 121.9 29.9 120.7 Z"/><path d="M30.1 110.9 H36.1 V104.4"/></g></svg>
<svg style="left:24.5px;top:155px" width="15.3" height="24.8" viewBox="-20.2 135.3 524 813" preserveAspectRatio="none"><g fill="#9c9da8"><path opacity="0.55" d="M371.772 135.308L241.068 367.61H-20.158l130.614-232.302h261.316"/><path opacity="0.7" d="M241.068 367.61h261.318L371.772 135.308H110.456L241.068 367.61z"/><path opacity="0.85" d="M110.456 599.822L241.068 367.61 110.456 135.308-20.158 367.61l130.614 232.212z"/><path opacity="0.55" d="M111.721 948.275l130.704-232.303h261.318L373.038 948.275H111.721"/><path opacity="0.7" d="M242.424 715.973H-18.893l130.613 232.303h261.317L242.424 715.973z"/><path opacity="0.85" d="M373.038 483.761L242.424 715.973l130.614 232.303 130.704-232.303-130.704-232.212z"/></g></svg>
<svg style="left:608px;top:7.7px" width="10" height="15.6" viewBox="-20.2 135.3 524 813" preserveAspectRatio="none"><g fill="#e4e5fb"><path opacity="0.75" d="M371.772 135.308L241.068 367.61H-20.158l130.614-232.302h261.316"/><path opacity="0.85" d="M241.068 367.61h261.318L371.772 135.308H110.456L241.068 367.61z"/><path opacity="0.95" d="M110.456 599.822L241.068 367.61 110.456 135.308-20.158 367.61l130.614 232.212z"/><path opacity="0.75" d="M111.721 948.275l130.704-232.303h261.318L373.038 948.275H111.721"/><path opacity="0.85" d="M242.424 715.973H-18.893l130.613 232.303h261.317L242.424 715.973z"/><path opacity="0.95" d="M373.038 483.761L242.424 715.973l130.614 232.303 130.704-232.303-130.704-232.212z"/></g></svg>
<svg style="left:19px;top:212px" width="28" height="28" viewBox="19 212 28 28"><g fill="#ffffff"><path d="M27.1 213.5 L20.1 224.7 Q23.8 228.6 27.5 229 Q31.6 228.4 34.4 224.8 Q33.6 219.5 29.2 214.6 Z"/><path d="M20.6 228 Q24 231.2 27.5 231.4 Q30.8 231 33.6 227.8 Q32 233 27.9 237.6 Q27.3 238.1 26.8 237.4 Z"/><path d="M30.8 214.3 L44.9 226 L30.8 237.2 Q36 231 35.8 225.8 Q35.6 220.5 30.8 214.3 Z"/></g></svg>
</body></html>
